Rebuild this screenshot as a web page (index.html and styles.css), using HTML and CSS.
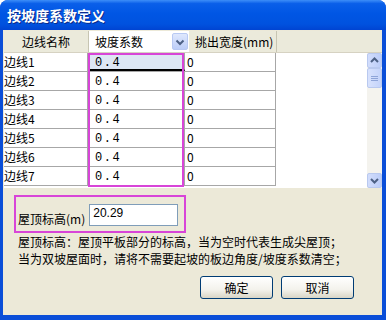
FILE: index.html
```html
<!DOCTYPE html>
<html lang="zh-CN">
<head>
  <meta charset="UTF-8" />
  <title>按坡度系数定义</title>
  <link rel="stylesheet" href="styles.css">
</head>
<body>
  <div class="window">
    <div class="titlebar">按坡度系数定义</div>
    <div class="client">
      <div class="grid">
        <div class="grid-head">
          <div class="hcell h-name">边线名称</div>
          <div class="hcell h-combo">
            <span>坡度系数</span>
            <span class="drop">
              <svg width="14" height="14" viewBox="0 0 14 14"><path d="M3.5 5.5 L7 9 L10.5 5.5" fill="none" stroke="#4d6185" stroke-width="2"/></svg>
            </span>
          </div>
          <div class="hcell h-width">挑出宽度(mm)</div>
          <div class="hcell h-fill"></div>
        </div>
        <div class="grid-body">
          <div class="rows">
            <div class="row"><div class="cell c1">边线1</div><div class="cell c2 sel">0.4</div><div class="cell c3">0</div></div>
            <div class="row"><div class="cell c1">边线2</div><div class="cell c2">0.4</div><div class="cell c3">0</div></div>
            <div class="row"><div class="cell c1">边线3</div><div class="cell c2">0.4</div><div class="cell c3">0</div></div>
            <div class="row"><div class="cell c1">边线4</div><div class="cell c2">0.4</div><div class="cell c3">0</div></div>
            <div class="row"><div class="cell c1">边线5</div><div class="cell c2">0.4</div><div class="cell c3">0</div></div>
            <div class="row"><div class="cell c1">边线6</div><div class="cell c2">0.4</div><div class="cell c3">0</div></div>
            <div class="row"><div class="cell c1">边线7</div><div class="cell c2">0.4</div><div class="cell c3">0</div></div>
          </div>
          <div class="filler"></div>
          <div class="vscroll">
            <div class="sbtn">
              <svg width="13" height="13" viewBox="0 0 13 13"><path d="M3 8 L6.5 4.5 L10 8" fill="none" stroke="#4d6185" stroke-width="2"/></svg>
            </div>
            <div class="thumb">
              <svg width="7" height="7" viewBox="0 0 7 7"><path d="M0 1.5 H7 M0 3.5 H7 M0 5.5 H7" stroke="#8ea4d8" stroke-width="1"/></svg>
            </div>
            <div class="track"></div>
            <div class="sbtn">
              <svg width="13" height="13" viewBox="0 0 13 13"><path d="M3 5 L6.5 8.5 L10 5" fill="none" stroke="#4d6185" stroke-width="2"/></svg>
            </div>
          </div>
          <div class="mark-col"></div>
        </div>
      </div>

      <div class="roof-box">
        <label class="roof-label" for="roofHeight">屋顶标高(m)</label>
        <input id="roofHeight" class="roof-input" type="text" value="20.29">
      </div>

      <p class="note">屋顶标高：屋顶平板部分的标高，当为空时代表生成尖屋顶；</p>
      <p class="note">当为双坡屋面时，请将不需要起坡的板边角度/坡度系数清空；</p>

      <div class="actions">
        <button class="btn">确定</button>
        <button class="btn">取消</button>
      </div>
    </div>
  </div>
</body>
</html>
```

FILE: styles.css
```css
body {
  margin: 0;
  background: #fff;
  font-family: "Noto Sans CJK SC", "Liberation Sans", sans-serif;
  font-size: 12px;
  color: #000;
}
.window {
  width: 386px;
  height: 320px;
  background: #0a4ed8;
  border-radius: 8px 8px 0 0;
  display: flex;
  flex-direction: column;
  overflow: hidden;
}
.titlebar {
  height: 30px;
  line-height: 31px;
  padding-left: 7px;
  color: #fff;
  font-weight: bold;
  font-size: 14px;
  text-shadow: 1px 1px 0 #0a2a8a;
  background: linear-gradient(#3d8ef8 0%, #0a5fe9 12%, #0056e4 45%, #0052df 80%, #0044d2 100%);
  flex-shrink: 0;
}
.client {
  flex: 1;
  margin: 0 4px 5px 3px;
  background: #ece9d8;
  padding: 1px 0 0 1px;
}

/* grid */
.grid { width: 378px; }
.grid-head {
  display: flex;
  height: 22px;
  background: #ebeadb;
  border-bottom: 1px solid #d6d2c2;
  box-sizing: border-box;
}
.hcell {
  height: 21px;
  line-height: 21px;
  box-sizing: border-box;
  border-right: 1px solid #c7c5b2;
}
.h-name { width: 85px; text-align: center; }
.h-combo {
  width: 100px;
  background: #fff;
  padding-left: 6px;
  display: flex;
  justify-content: space-between;
  align-items: center;
  border-right: none;
  margin-right: 1px;
}
.drop {
  width: 16px;
  height: 17px;
  margin-right: 1px;
  box-sizing: border-box;
  border: 1px solid #b8c9f3;
  border-radius: 2px;
  background: linear-gradient(#dfe8fd, #bccdf8);
  display: flex;
  align-items: center;
  justify-content: center;
}
.h-width { width: 87px; padding-left: 5px; }
.h-fill { flex: 1; border-right: none; }

.grid-body {
  position: relative;
  display: flex;
  height: 135px;
  background: #fff;
}
.rows { width: 272px; }
.row {
  display: flex;
  height: 19px;
  border-bottom: 1px solid #a7a7a7;
  box-sizing: border-box;
}
.cell {
  line-height: 18px;
  box-sizing: border-box;
  border-right: 1px solid #a7a7a7;
}
.c1 { width: 84px; }
.c2 {
  width: 97px;
  padding: 3px 0 0 7px;
  line-height: 15px;
  font-family: "Liberation Mono", monospace;
  letter-spacing: 1.5px;
}
.c3 { width: 91px; padding-left: 2px; }
.sel {
  background: #dde7f4;
  border-left: 2px solid #000;
  border-bottom: 2px solid #000;
  padding-left: 5px;
  line-height: 14px;
}
.filler { flex: 1; }
.vscroll {
  width: 15px;
  background: #f4f3ee;
  display: flex;
  flex-direction: column;
}
.sbtn {
  height: 15px;
  box-sizing: border-box;
  border: 1px solid #b9c9ef;
  border-radius: 2px;
  background: linear-gradient(90deg, #d2ddfc, #bccdf8);
  display: flex;
  align-items: center;
  justify-content: center;
}
.thumb {
  height: 20px;
  box-sizing: border-box;
  border: 1px solid #b9c9ef;
  border-radius: 2px;
  background: linear-gradient(90deg, #d8e2fd, #c4d3fa);
  display: flex;
  align-items: center;
  justify-content: center;
}
.track { flex: 1; }
.mark-col {
  position: absolute;
  left: 84px;
  top: 0;
  width: 96px;
  height: 134px;
  box-sizing: border-box;
  border: 2px solid #d845d8;
}

/* roof height */
.roof-box {
  margin: 7px 0 0 10px;
  width: 172px;
  height: 38px;
  box-sizing: border-box;
  border: 2px solid #d845d8;
  padding: 7px 0 0 2px;
  display: flex;
  align-items: flex-start;
  gap: 4px;
}
.roof-label {
  line-height: 16px;
  margin-top: 7px;
}
.roof-input {
  width: 89px;
  height: 22px;
  box-sizing: border-box;
  border: 1px solid #7f9db9;
  padding: 0 3px 4px;
  font-family: "Liberation Sans", sans-serif;
  font-size: 12px;
  margin: 0;
}
.note {
  margin: 0 0 0 14px;
  line-height: 17px;
  white-space: nowrap;
}
.actions {
  display: flex;
  justify-content: flex-end;
  gap: 8px;
  margin-top: 9px;
  padding-right: 28px;
}
.btn {
  width: 73px;
  height: 23px;
  border: 1px solid #003c74;
  border-radius: 3px;
  background: linear-gradient(#ffffff, #f3f2ec 60%, #d9d5c6);
  font-family: "Noto Sans CJK SC", sans-serif;
  font-size: 12px;
  padding: 0;
  color: #000;
}
```
